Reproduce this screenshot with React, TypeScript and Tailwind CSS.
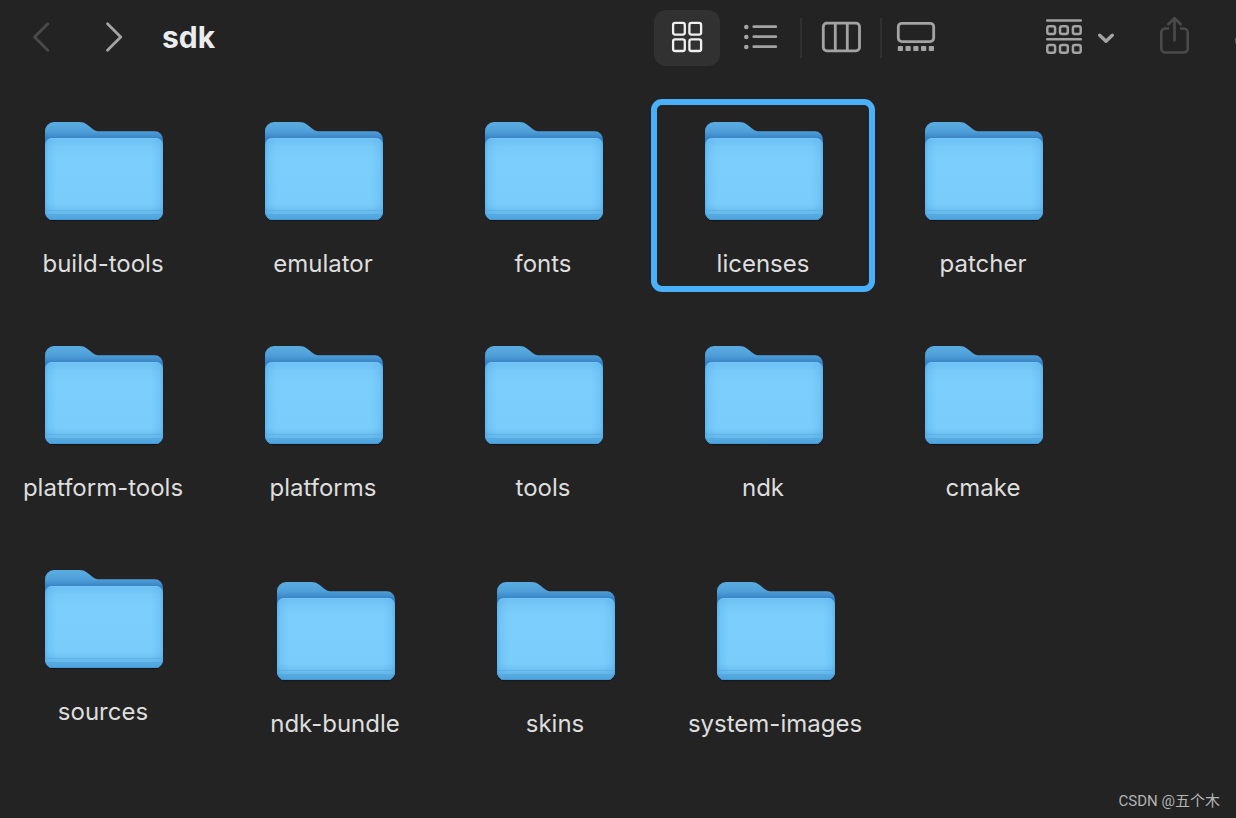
import React from 'react';

const rows = [
  ['build-tools', 'emulator', 'fonts', 'licenses', 'patcher'],
  ['platform-tools', 'platforms', 'tools', 'ndk', 'cmake'],
];

const looseItems = ['ndk-bundle', 'skins', 'system-images'];

const selected = 'licenses';

/* Gradients shared by every folder icon */
const FolderDefs: React.FC = () => (
  <svg className="absolute w-0 h-0" aria-hidden="true">
    <defs>
      <linearGradient id="folder-back" x1="0" y1="4" x2="0" y2="21" gradientUnits="userSpaceOnUse">
        <stop offset="0" stopColor="#5aade2" />
        <stop offset="0.55" stopColor="#4f9fd8" />
        <stop offset="1" stopColor="#3580c4" />
      </linearGradient>
      <linearGradient id="folder-front" x1="0" y1="20" x2="0" y2="102" gradientUnits="userSpaceOnUse">
        <stop offset="0" stopColor="#6cbff2" />
        <stop offset="0.1" stopColor="#77c9f8" />
        <stop offset="0.25" stopColor="#7ccffc" />
        <stop offset="0.8" stopColor="#7acdfb" />
        <stop offset="0.87" stopColor="#70c2f2" />
        <stop offset="0.93" stopColor="#66b8ea" />
        <stop offset="0.94" stopColor="#57aae0" />
        <stop offset="1" stopColor="#4da2dc" />
      </linearGradient>
      <linearGradient id="folder-sides" x1="6" y1="0" x2="124" y2="0" gradientUnits="userSpaceOnUse">
        <stop offset="0" stopColor="#3f9bdc" stopOpacity="0.5" />
        <stop offset="0.03" stopColor="#4aa6e4" stopOpacity="0.22" />
        <stop offset="0.1" stopColor="#4aa6e4" stopOpacity="0" />
        <stop offset="0.9" stopColor="#4aa6e4" stopOpacity="0" />
        <stop offset="0.97" stopColor="#4aa6e4" stopOpacity="0.22" />
        <stop offset="1" stopColor="#3f9bdc" stopOpacity="0.5" />
      </linearGradient>
    </defs>
  </svg>
);

const FolderIcon: React.FC = () => (
  <svg width="128" height="104" viewBox="0 0 128 104" aria-hidden="true">
    <rect x="6" y="26" width="118" height="77.3" rx="8" fill="#141414" opacity="0.7" />
    <path
      d="M6 13a9 9 0 0 1 9-9h25c4 0 6.500 1.200 9 3.300l4 3.200c2.500 2 4.500 2.800 8 2.800h55a8 8 0 0 1 8 8V94a8 8 0 0 1-8 8H14a8 8 0 0 1-8-8z"
      fill="url(#folder-back)"
    />
    <path d="M6 27a7 7 0 0 1 7-7h104a7 7 0 0 1 7 7v67a8 8 0 0 1-8 8H14a8 8 0 0 1-8-8z" fill="url(#folder-front)" />
    <path d="M6 27a7 7 0 0 1 7-7h104a7 7 0 0 1 7 7v67a8 8 0 0 1-8 8H14a8 8 0 0 1-8-8z" fill="url(#folder-sides)" />
    <path d="M8.500 22.200q2-1.700 4.500-1.700h104q2.500 0 4.500 1.700" fill="none" stroke="#7ecbf6" strokeWidth="0.8" opacity="0.6" />
    <path d="M6.500 92.500h117M6.500 96.500h117" stroke="#4a9fda" strokeWidth="1" opacity="0.4" />
    <path d="M10 101.500h110" stroke="#3f93d0" strokeWidth="1" opacity="0.6" />
  </svg>
);

const Folder: React.FC<{ name: string }> = ({ name }) => (
  <button className="relative flex flex-col items-center w-[206px] h-[193px] pt-[19px] shrink-0">
    {name === selected && (
      <span className="absolute inset-y-0 -inset-x-[9px] border-[6px] border-[#4bb0fa] rounded-[11px]" />
    )}
    <FolderIcon />
    <span className="mt-[27px] text-[24px] leading-[30px] text-[#dedede] whitespace-nowrap">{name}</span>
  </button>
);

const Divider: React.FC = () => <div className="w-[2px] h-10 bg-[#303030]" />;

const Toolbar: React.FC = () => (
  <header className="flex items-center pt-[10px] pl-[21px] overflow-hidden">
    <nav className="flex gap-[33px]">
      <button aria-label="Back" disabled>
        <svg width="40" height="56" fill="none" stroke="#4a4a4a" strokeWidth="2.8" strokeLinecap="round" strokeLinejoin="round">
          <path d="M26.800 13.800 13.500 27l13.300 13.200" />
        </svg>
      </button>
      <button aria-label="Forward">
        <svg width="40" height="56" fill="none" stroke="#a3a3a3" strokeWidth="2.8" strokeLinecap="round" strokeLinejoin="round">
          <path d="M13.500 13.800 26.800 27 13.500 40.200" />
        </svg>
      </button>
    </nav>
    <h1 className="ml-7 pb-0.5 text-[30px] leading-[54px] font-bold text-[#ececec]">sdk</h1>

    <div className="flex items-center ml-auto">
      <button aria-label="Icon view" className="rounded-xl bg-[#313131]">
        <svg width="66" height="56" fill="none" stroke="#f0f0f0" strokeWidth="2.3">
          <rect x="19.100" y="12.900" width="11.700" height="11.700" rx="2" />
          <rect x="35.400" y="12.900" width="11.700" height="11.700" rx="2" />
          <rect x="19.100" y="29.300" width="11.700" height="11.700" rx="2" />
          <rect x="35.400" y="29.300" width="11.700" height="11.700" rx="2" />
        </svg>
      </button>
      <button aria-label="List view">
        <svg width="80" height="56" fill="#a3a3a3" stroke="#a3a3a3" strokeWidth="2.8" strokeLinecap="round">
          <path d="M33.800 16.700h22M33.800 26.700h22M33.800 36.700h22" />
          <g stroke="none">
            <circle cx="26.300" cy="17" r="2.300" />
            <circle cx="26.300" cy="27" r="2.300" />
            <circle cx="26.300" cy="37" r="2.300" />
          </g>
        </svg>
      </button>
      <Divider />
      <button aria-label="Column view">
        <svg width="78" height="56" fill="none" stroke="#a3a3a3" strokeWidth="2.8">
          <rect x="21.300" y="13.200" width="36.200" height="27.600" rx="3.500" />
          <path d="M33.300 13v28M45.300 13v28" />
        </svg>
      </button>
      <Divider />
      <button aria-label="Gallery view">
        <svg width="68" height="56" fill="none" stroke="#a3a3a3" strokeWidth="2.8">
          <rect x="16.300" y="13.300" width="35.400" height="18.300" rx="3.500" />
          <g fill="#a3a3a3" stroke="none">
            <rect x="15.800" y="36" width="5.200" height="5" rx="0.8" />
            <rect x="23.500" y="36" width="5.200" height="5" rx="0.8" />
            <rect x="31.300" y="36" width="5.200" height="5" rx="0.8" />
            <rect x="39" y="36" width="5.200" height="5" rx="0.8" />
            <rect x="46.800" y="36" width="5.200" height="5" rx="0.8" />
          </g>
        </svg>
      </button>

      <button aria-label="Group items" className="ml-24">
        <svg width="68" height="56" fill="none" stroke="#a3a3a3" strokeWidth="2.5">
          <path d="M1.200 10.600h33.600M1.200 29.300h33.600" strokeLinecap="round" />
          <rect x="1.300" y="16.300" width="7.800" height="7.600" rx="2" />
          <rect x="14" y="16.300" width="7.800" height="7.600" rx="2" />
          <rect x="26.900" y="16.300" width="7.800" height="7.600" rx="2" />
          <rect x="1.300" y="35.100" width="7.800" height="7.600" rx="2" />
          <rect x="14" y="35.100" width="7.800" height="7.600" rx="2" />
          <rect x="26.900" y="35.100" width="7.800" height="7.600" rx="2" />
          <path d="M53.700 25.200 60 31.300l6.300-6.100" strokeWidth="3.300" strokeLinecap="round" strokeLinejoin="round" />
        </svg>
      </button>
      <button aria-label="Share" className="ml-[46px]" disabled>
        <svg width="30" height="56" fill="none" stroke="#4a4a4a" strokeWidth="2.6" strokeLinecap="round" strokeLinejoin="round">
          <path d="M9 18.500H5.300a4 4 0 0 0-4 4V38.500a4 4 0 0 0 4 4h18.400a4 4 0 0 0 4-4V22.500a4 4 0 0 0-4-4H20" strokeLinecap="butt" />
          <path d="M14.500 30.500V8.500M8.300 14.300l6.200-6.100 6.200 6.100" />
        </svg>
      </button>
      <button aria-label="Search" className="ml-[45px]">
        <svg width="1" height="56">
          <circle cx="3" cy="30.500" r="3.500" fill="#5a5a5a" />
        </svg>
      </button>
    </div>
  </header>
);

const App: React.FC = () => {
  return (
    <div className="flex flex-col min-h-screen overflow-hidden bg-[#232323] font-['Inter',sans-serif]">
      <FolderDefs />
      <Toolbar />

      <main className="flex flex-col gap-[31px] pt-[33px]">
        {rows.map((row) => (
          <div key={row[0]} className="flex gap-[14px]">
            {row.map((name) => (
              <Folder key={name} name={name} />
            ))}
          </div>
        ))}
        <div className="flex items-start">
          <Folder name="sources" />
          <div className="flex gap-[14px] mt-3 ml-[26px]">
            {looseItems.map((name) => (
              <Folder key={name} name={name} />
            ))}
          </div>
        </div>
      </main>

      <footer className="mt-auto pr-4 pb-2 text-right text-[15px] leading-[18px] text-[#b4b4b4] font-['Roboto','Noto_Sans_CJK_SC',sans-serif]">
        CSDN @五个木
      </footer>
    </div>
  );
};

export default App;
